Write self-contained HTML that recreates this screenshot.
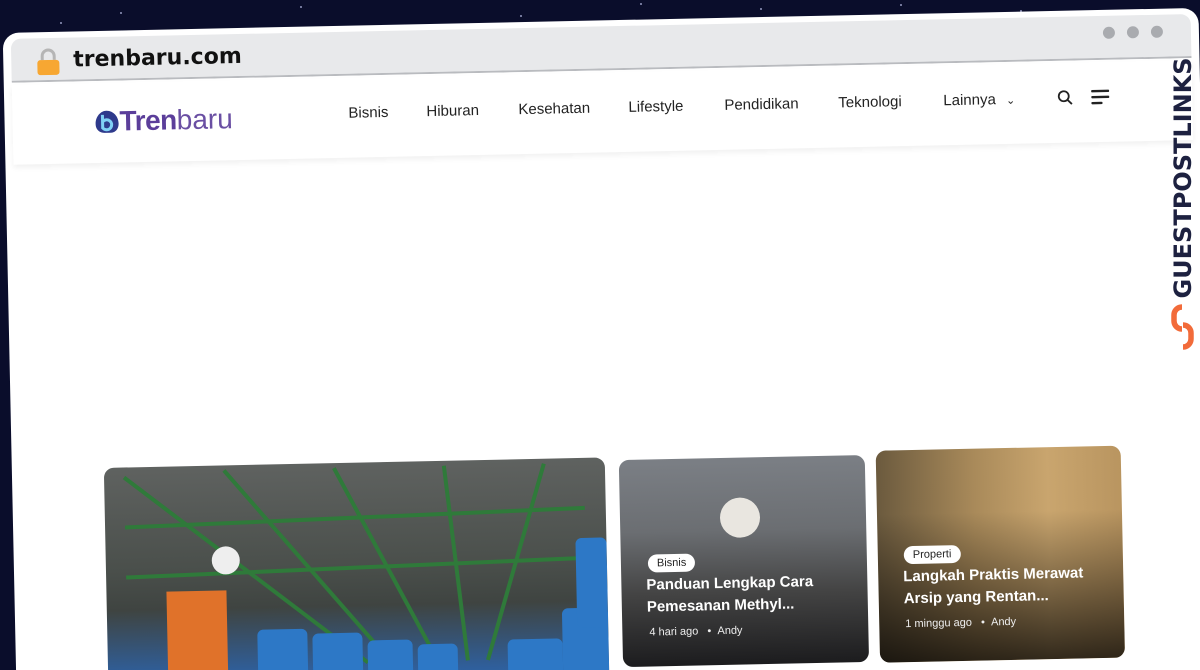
<!DOCTYPE html>
<html><head><meta charset="utf-8"><style>
*{margin:0;padding:0;box-sizing:border-box}
html,body{width:1200px;height:670px;overflow:hidden}
body{background:#0a0d2b;font-family:"Liberation Sans",sans-serif;position:relative}
.star{position:absolute;width:2px;height:2px;background:#cfd3ff;border-radius:50%;opacity:.7}
#w{position:absolute;left:0;top:0;width:1200px;height:700px;transform:rotate(-1.2deg);transform-origin:0 0;overflow:hidden}
.frame{position:absolute;left:2px;top:33px;width:1196px;height:700px;background:#fff;border-radius:16px}
.bar{position:absolute;left:10px;top:39px;width:1180px;height:44px;background:#e8e9eb;border-radius:10px 10px 0 0;border-bottom:2px solid #b9bbbf}
.url{position:absolute;left:72px;top:49px;font:bold 22px "DejaVu Sans",sans-serif;color:#111}
.dot{position:absolute;top:50px;width:12px;height:12px;border-radius:50%;background:#a9abaf}
.hdr{position:absolute;left:10px;top:85px;width:1180px;height:80px;background:#fff;box-shadow:0 3px 6px rgba(0,0,0,.06)}
.nav{position:absolute;top:112px;font-size:15px;color:#222}
.card{position:absolute;border-radius:10px;overflow:hidden}
.tag{position:absolute;background:#fff;color:#222;font-size:11px;padding:3px 9px;border-radius:10px}
.tt{position:absolute;color:#fff;font-weight:bold;font-size:15px;line-height:22px}
.mt{position:absolute;color:#eee;font-size:11px}
.gp{position:absolute;left:1183px;top:178px;transform:translate(-50%,-50%) rotate(-90deg);font-family:'DejaVu Sans',sans-serif;font-weight:bold;font-size:24px;color:#1d2140;white-space:nowrap}
</style></head><body>
<div class="star" style="left:120px;top:12px"></div><div class="star" style="left:300px;top:6px"></div><div class="star" style="left:520px;top:15px"></div><div class="star" style="left:760px;top:8px"></div><div class="star" style="left:900px;top:4px"></div><div class="star" style="left:60px;top:22px"></div><div class="star" style="left:640px;top:3px"></div><div class="star" style="left:1020px;top:10px"></div>
<div id="w">
<div class="frame"></div>
<div class="bar"></div>
<svg style="position:absolute;left:35px;top:49px" width="24" height="28" viewBox="0 0 24 28"><path d="M6 12V8a6 6 0 0 1 12 0v4" fill="none" stroke="#b5b5b5" stroke-width="3"/><rect x="1" y="12" width="22" height="15" rx="3" fill="#f7a732"/></svg>
<div class="url">trenbaru.com</div>
<div class="dot" style="left:1102px"></div><div class="dot" style="left:1126px"></div><div class="dot" style="left:1150px"></div>
<div class="hdr"></div>
<div style="position:absolute;left:91px;top:109px;height:30px;display:flex;align-items:center">
<svg width="26" height="26" viewBox="0 0 26 26"><path d="M13 2C7 2 2 8 2 15c0 6 4 9 9 9h6c5 0 8-4 8-9C25 8 20 2 13 2z" fill="#2e3a8c"/><path d="M9 6v14M9 13a5 5 0 1 1 0 6" stroke="#7fd0f5" stroke-width="3" fill="none"/></svg>
<span style="font-size:28px;font-weight:bold;color:#5b3e9a;letter-spacing:-.5px">Tren</span><span style="font-size:28px;color:#6a4fa3">baru</span></div>
<div class="nav" style="left:346px">Bisnis</div>
<div class="nav" style="left:424px">Hiburan</div>
<div class="nav" style="left:516px">Kesehatan</div>
<div class="nav" style="left:626px">Lifestyle</div>
<div class="nav" style="left:722px">Pendidikan</div>
<div class="nav" style="left:836px">Teknologi</div>
<div class="nav" style="left:941px">Lainnya <span style="font-size:11px;margin-left:6px">&#8964;</span></div>
<svg style="position:absolute;left:1055px;top:112px" width="16" height="16" viewBox="0 0 16 16"><circle cx="6.5" cy="6.5" r="5" fill="none" stroke="#222" stroke-width="1.8"/><path d="M10 10l4.5 4.5" stroke="#222" stroke-width="1.8"/></svg>
<svg style="position:absolute;left:1089px;top:112px" width="18" height="16" viewBox="0 0 18 16"><path d="M1 2h16M1 8h16M1 14h9" stroke="#222" stroke-width="2.4" stroke-linecap="round"/></svg>

<div class="card" style="left:94px;top:470px;width:501px;height:260px;background:linear-gradient(180deg,#5f6260 0%,#4a4f4b 40%,#3f4441 55%,#2f5f9c 80%,#2d6fb8 100%)">
<svg width="501" height="260" style="position:absolute;left:0;top:0"><g stroke="#2f7a3a" stroke-width="4" fill="none"><path d="M20 10L260 200M120 5L300 220M230 5L330 200M340 5L360 200M440 5L380 200M20 60L480 50M20 110L480 100"/></g><rect x="60" y="125" width="60" height="100" fill="#e0722a"/><circle cx="120" cy="95" r="14" fill="#eee"/><g fill="#2d78c6"><rect x="150" y="165" width="50" height="60" rx="6"/><rect x="205" y="170" width="50" height="60" rx="6"/><rect x="260" y="178" width="45" height="60" rx="6"/><rect x="310" y="183" width="40" height="60" rx="6"/><rect x="400" y="180" width="55" height="60" rx="6"/><rect x="455" y="150" width="46" height="80" rx="6"/><rect x="470" y="80" width="31" height="90" rx="6"/></g></svg>
</div>
<div class="card" style="left:609px;top:473px;width:246px;height:207px;background:linear-gradient(180deg,#7b7f85 0%,#6b6e72 35%,#444 65%,#1c1c1e 100%)">
<div style="position:absolute;left:100px;top:40px;width:40px;height:40px;border-radius:50%;background:#e9e6e0"></div>
<div class="tag" style="left:27px;top:95px">Bisnis</div>
<div class="tt" style="left:25px;top:115px">Panduan Lengkap Cara<br>Pemesanan Methyl...</div>
<div class="mt" style="left:27px;top:167px">4 hari ago &nbsp; • &nbsp;Andy</div>
</div>
<div class="card" style="left:866px;top:469px;width:245px;height:212px;background:linear-gradient(90deg,#6b5a3e 0%,#a98a5a 40%,#c9a56e 70%,#b99560 100%)">
<div style="position:absolute;inset:0;background:linear-gradient(180deg,rgba(0,0,0,0) 30%,rgba(0,0,0,.75) 100%)"></div>
<div class="tag" style="left:26px;top:96px">Properti</div>
<div class="tt" style="left:25px;top:116px">Langkah Praktis Merawat<br>Arsip yang Rentan...</div>
<div class="mt" style="left:26px;top:168px">1 minggu ago &nbsp; • &nbsp;Andy</div>
</div>
</div>
<div class="gp">GUESTPOSTLINKS</div>
<svg style="position:absolute;left:1170px;top:303px" width="25" height="48" viewBox="0 0 25 48"><path d="M12 4a8 8 0 0 0-8 8v6a8 8 0 0 0 8 8M13 22a8 8 0 0 1 8 8v6a8 8 0 0 1-8 8" fill="none" stroke="#f26b3a" stroke-width="5.5"/></svg>
</body></html>
